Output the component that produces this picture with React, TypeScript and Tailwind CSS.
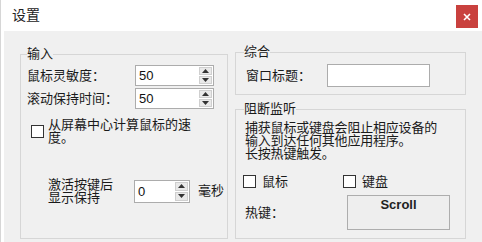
import React from "react";

const FONT = { fontFamily: '"Liberation Sans", "Noto Sans CJK SC", sans-serif' };

function Spin({ value, w, h }: { value: string; w: string; h: string }) {
  return (
    <div className={`flex ${w} ${h} bg-white border border-[#acacac]`}>
      <div className="flex-1 pl-[3px] text-[13px] leading-none flex items-center text-[#111]">{value}</div>
      <div className="w-[14px] flex flex-col gap-[1px] p-[1px] pl-0">
        <div className="flex-1 bg-[#e9e9e9] border border-[#cfcfcf] flex items-center justify-center">
          <svg width="7" height="4" viewBox="0 0 7 4"><path d="M3.5 0 L7 4 L0 4 Z" fill="#333" /></svg>
        </div>
        <div className="flex-1 bg-[#e9e9e9] border border-[#cfcfcf] flex items-center justify-center">
          <svg width="7" height="4" viewBox="0 0 7 4"><path d="M0 0 L7 0 L3.5 4 Z" fill="#333" /></svg>
        </div>
      </div>
    </div>
  );
}

function Box() {
  return <div className="w-[13px] h-[13px] shrink-0 bg-white border border-[#333]" />;
}

export default function App() {
  return (
    <div className="w-[482px] h-[242px] bg-white flex flex-col border-l border-[#d6d6d6] text-[#1a1a1a] overflow-hidden" style={FONT}>
      <div className="h-[31px] shrink-0 flex items-center justify-between pl-[11px] pr-[4px]">
        <span className="text-[14px] text-[#222]">设置</span>
        <div className="w-[22px] h-[23px] bg-[#c9413e] flex items-center justify-center mt-[2px]">
          <svg width="8" height="8" viewBox="0 0 8 8"><path d="M1 1 L7 7 M7 1 L1 7" stroke="#fff" strokeWidth="1.6" /></svg>
        </div>
      </div>
      <div className="flex-1 ml-[3px] bg-[#f0f0f0] flex items-start pl-[16px] gap-[7px] text-[13px]">
        {/* 输入 */}
        <fieldset className="mt-[15px] w-[208px] h-[193px] border border-[#d6d6d6] px-0 pb-0 m-0">
          <legend className="ml-[6px] px-0 leading-[16px]">输入</legend>
          <div className="flex flex-col pl-[6px] pt-[3px]">
            <div className="flex items-center h-[21px]">
              <span className="w-[108px]">鼠标灵敏度：</span>
              <Spin value="50" w="w-[79px]" h="h-[21px]" />
            </div>
            <div className="flex items-center h-[21px] mt-[2px]">
              <span className="w-[108px]">滚动保持时间：</span>
              <Spin value="50" w="w-[79px]" h="h-[21px]" />
            </div>
            <div className="flex items-center mt-[9px] pl-[4px] gap-[4px]">
              <Box />
              <span className="w-[155px] leading-[13px]">从屏幕中心计算鼠标的速度。</span>
            </div>
            <div className="flex items-center mt-[34px] pl-[21px]">
              <span className="w-[86px] leading-[13px]">激活按键后<br />显示保持</span>
              <Spin value="0" w="w-[56px]" h="h-[23px]" />
              <span className="ml-[8px]">毫秒</span>
            </div>
          </div>
        </fieldset>
        <div className="mt-[13px] w-[231px] flex flex-col">
          <fieldset className="h-[51px] border border-[#d6d6d6] px-0 pb-0 m-0">
            <legend className="ml-[8px] px-0 leading-[16px]">综合</legend>
            <div className="flex items-center pl-[10px] pt-[4px]">
              <span className="w-[81px]">窗口标题：</span>
              <div className="w-[103px] h-[23px] bg-white border border-[#acacac]" />
            </div>
          </fieldset>
          <fieldset className="mt-[6px] h-[138px] border border-[#d6d6d6] px-0 pb-0 m-0">
            <legend className="ml-[8px] px-0 leading-[16px]">阻断监听</legend>
            <div className="flex flex-col pl-[9px] pt-[4px]">
              <p className="leading-[13px] tracking-[-0.2px]">
                捕获鼠标或键盘会阻止相应设备的<br />输入到达任何其他应用程序。<br />长按热键触发。
              </p>
              <div className="flex items-center mt-[15px] h-[13px]">
                <div className="w-[100px] flex items-center gap-[6px] -ml-[2px]">
                  <Box />
                  <span>鼠标</span>
                </div>
                <div className="flex items-center gap-[6px]">
                  <Box />
                  <span>键盘</span>
                </div>
              </div>
              <div className="flex items-center mt-[7px]">
                <span className="w-[102px]">热键：</span>
                <div className="w-[103px] h-[35px] bg-[#eeeeee] border border-[#adadad] flex justify-center pt-[1px]">
                  <span className="font-bold leading-[16px] text-[#222]">Scroll</span>
                </div>
              </div>
            </div>
          </fieldset>
        </div>
      </div>
    </div>
  );
}
